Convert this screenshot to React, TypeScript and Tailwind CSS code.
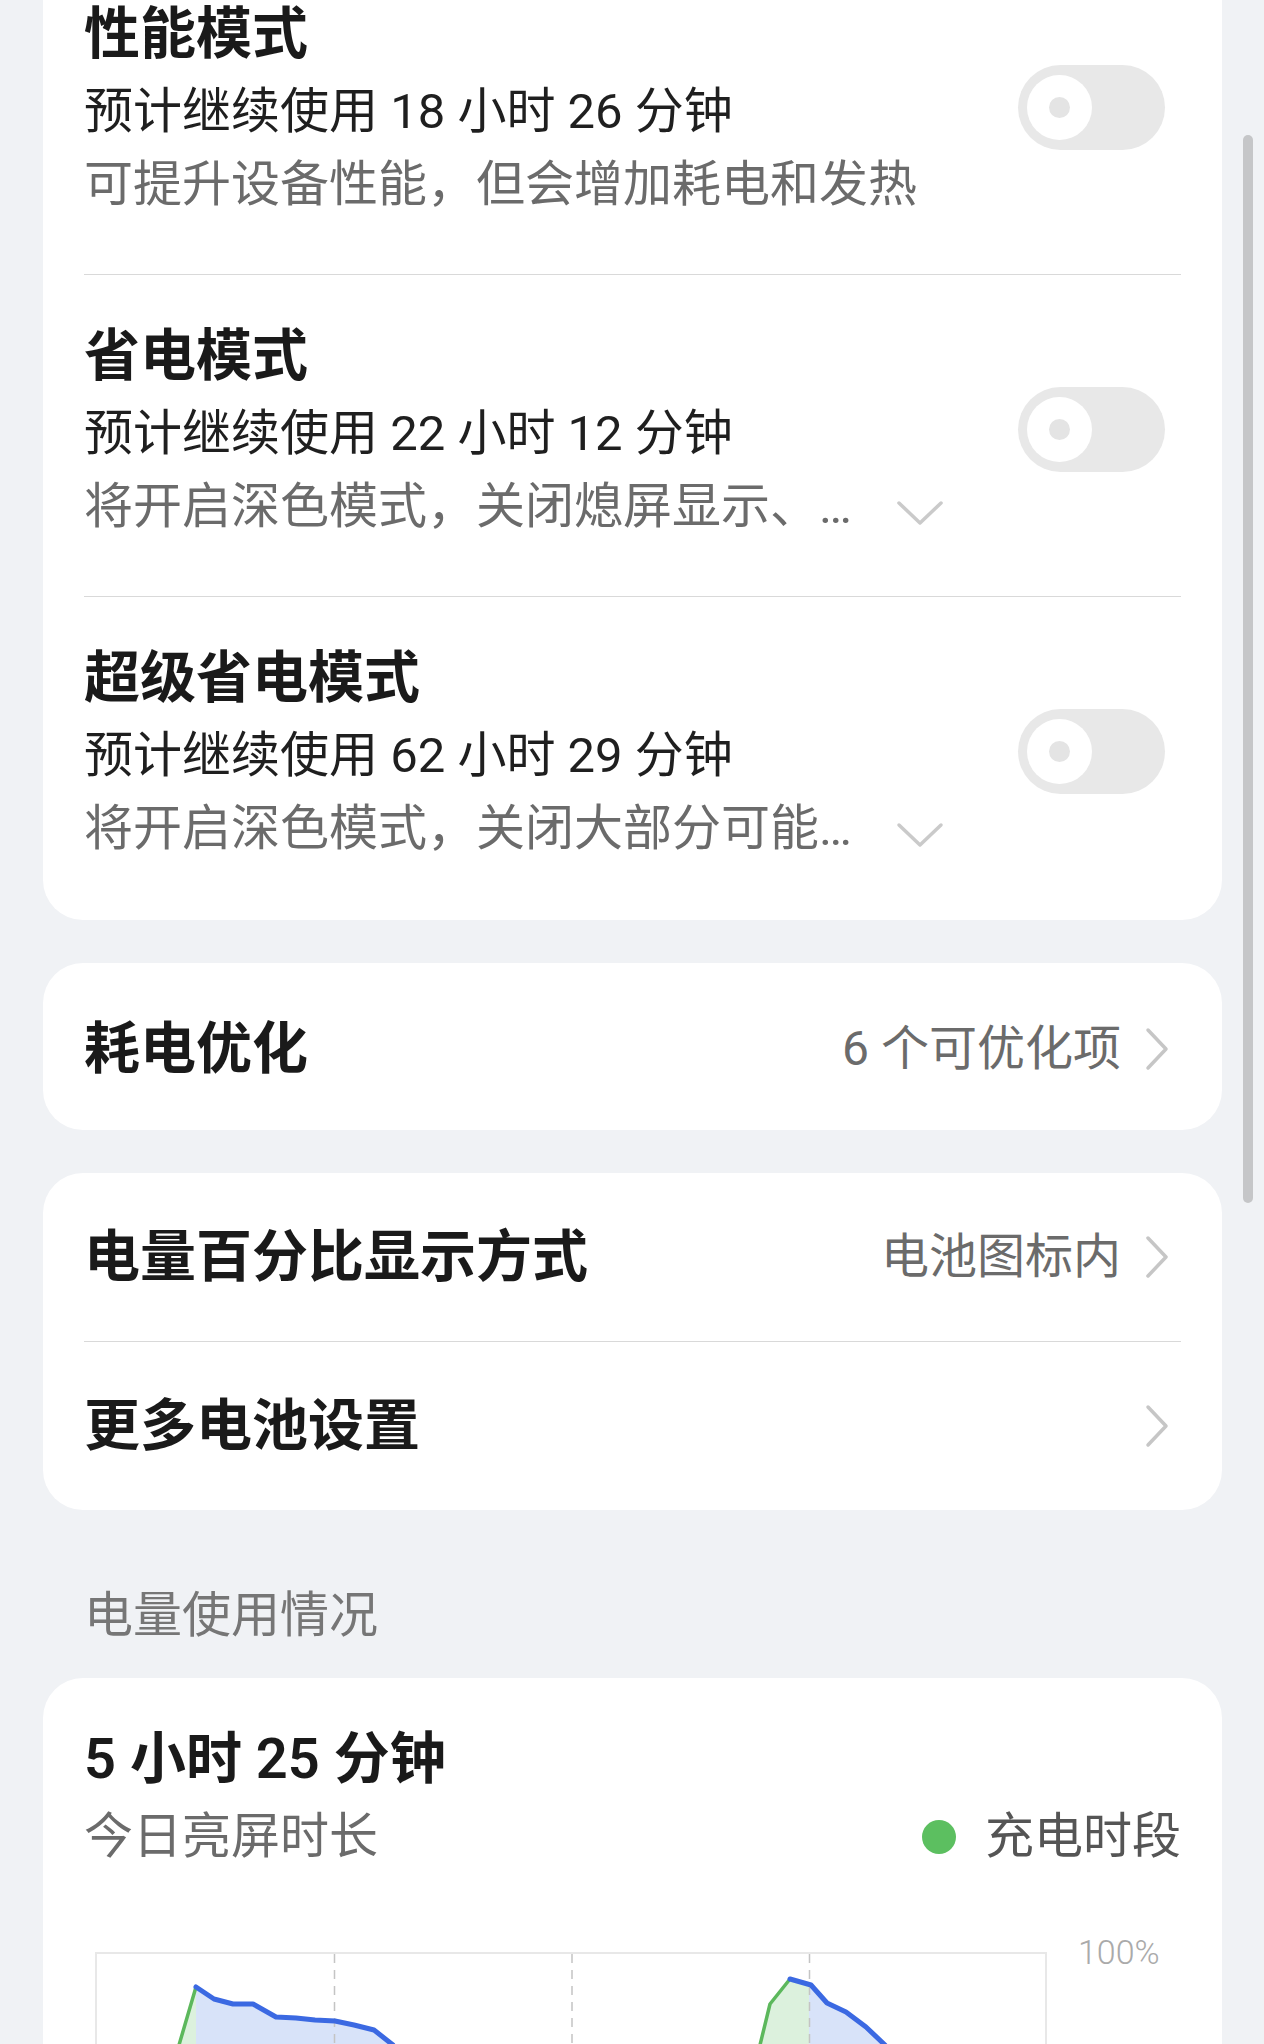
import React from "react";

function Toggle() {
  return (
    <div className="flex items-center pl-[9px] w-[147px] h-[85px] rounded-full bg-[#e8e8e8] shrink-0 mr-[16px]">
      <div className="flex items-center justify-center w-[65px] h-[65px] rounded-full bg-white">
        <div className="w-[21px] h-[21px] rounded-full bg-[#e4e4e4]" />
      </div>
    </div>
  );
}

function ChevronDown() {
  return (
    <svg width="48" height="26" viewBox="0 0 48 26" className="ml-[12px] mt-[28px] shrink-0">
      <path d="M3 3 L24 23 L45 3" fill="none" stroke="#cacaca" strokeWidth="3.5" strokeLinecap="round" strokeLinejoin="round" />
    </svg>
  );
}

function ChevronRight() {
  return (
    <svg width="24" height="44" viewBox="0 0 24 44" className="ml-[24px] mr-[12px] shrink-0">
      <path d="M3 3 L21 22 L3 41" fill="none" stroke="#c6c6c6" strokeWidth="3.5" strokeLinecap="round" strokeLinejoin="round" />
    </svg>
  );
}

type Mode = { title: string; sub: string; desc: string; more?: boolean };

const modes: Mode[] = [
  { title: "性能模式", sub: "预计继续使用 18 小时 26 分钟", desc: "可提升设备性能，但会增加耗电和发热" },
  { title: "省电模式", sub: "预计继续使用 22 小时 12 分钟", desc: "将开启深色模式，关闭熄屏显示、…", more: true },
  { title: "超级省电模式", sub: "预计继续使用 62 小时 29 分钟", desc: "将开启深色模式，关闭大部分可能…", more: true },
];

function ModeItem({ m }: { m: Mode }) {
  return (
    <div className="flex items-center pt-[41px] pb-[54px]">
      <div className="flex-1 min-w-0">
        <div className="text-[56px] leading-[80px] font-semibold text-[#1a1a1a]">{m.title}</div>
        <div className="text-[49px] leading-[76px] text-[#1f1f1f]">{m.sub}</div>
        <div className="flex items-start text-[49px] leading-[70px] text-[#6b6b6b]">
          <span className="w-[800px] whitespace-nowrap">{m.desc}</span>
          {m.more && <ChevronDown />}
        </div>
      </div>
      <Toggle />
    </div>
  );
}

function Chart() {
  const blue1 = "99,33 117,45 136,50 156,50 179,63 199,64 218,66 238,67 257,71 277,76 296,91 315,120 330,160 345,205 356,250 362,300";
  const green1 = "40,300 64,150 82,91 99,33";
  const green2 = "650,300 657,130 663,91 673,50 693,25";
  const blue2 = "693,25 714,31 730,49 749,58 769,73 788,91 805,120 820,170 830,230 835,300";
  return (
    <svg width="950" height="300" viewBox="0 0 950 300" className="block">
      <polygon points={`${green1} 99,300`} fill="#dcf1dd" />
      <polygon points={`${blue1} 99,300`} fill="#d8e3f9" />
      <polygon points={`${green2} 712,30 712,300`} fill="#dcf1dd" />
      <polygon points={`712,30 ${blue2} 712,300`} fill="#d8e3f9" />
      {[237.5, 475, 712.5].map((x) => (
        <line key={x} x1={x} y1="0" x2={x} y2="300" stroke="#c4c4c4" strokeWidth="1.5" strokeDasharray="9 7" />
      ))}
      <polyline points={green1} fill="none" stroke="#5cb85c" strokeWidth="3.5" strokeLinejoin="round" />
      <polyline points={green2} fill="none" stroke="#5cb85c" strokeWidth="3.5" strokeLinejoin="round" />
      <polyline points={blue1} fill="none" stroke="#3b69e2" strokeWidth="5" strokeLinejoin="round" strokeLinecap="round" />
      <polyline points={blue2} fill="none" stroke="#3b69e2" strokeWidth="5" strokeLinejoin="round" strokeLinecap="round" />
    </svg>
  );
}

export default function App() {
  return (
    <div className="relative h-[2044px] overflow-hidden bg-[#f0f2f5] font-['Roboto','Noto_Sans_CJK_SC',sans-serif]">
      <div className="pl-[43px] pr-[42px]">
        {/* Modes card */}
        <div className="-mt-[47px] bg-white rounded-[40px] px-[41px] pb-[2px]">
          {modes.map((m, i) => (
            <div key={m.title}>
              {i > 0 && <div className="h-px bg-[#d9d9d9]" />}
              <ModeItem m={m} />
            </div>
          ))}
        </div>

        {/* 耗电优化 */}
        <div className="mt-[43px] bg-white rounded-[40px] px-[41px]">
          <div className="flex items-center h-[167px] pt-[4px]">
            <div className="flex-1 text-[56px] font-semibold text-[#1a1a1a]">耗电优化</div>
            <div className="text-[48px] text-[#6b6b6b]">6 个可优化项</div>
            <ChevronRight />
          </div>
        </div>

        {/* settings */}
        <div className="mt-[43px] bg-white rounded-[40px] px-[41px]">
          <div className="flex items-center h-[168px]">
            <div className="flex-1 text-[56px] font-semibold text-[#1a1a1a]">电量百分比显示方式</div>
            <div className="text-[48px] text-[#6b6b6b]">电池图标内</div>
            <ChevronRight />
          </div>
          <div className="h-px bg-[#d9d9d9]" />
          <div className="flex items-center h-[168px]">
            <div className="flex-1 text-[56px] font-semibold text-[#1a1a1a]">更多电池设置</div>
            <ChevronRight />
          </div>
        </div>

        {/* section header */}
        <div className="mt-[74px] px-[41px] text-[49px] leading-[64px] text-[#767676]">电量使用情况</div>

        {/* usage card */}
        <div className="mt-[30px] bg-white rounded-[40px] px-[41px] pt-[41px] pb-[40px]">
          <div className="text-[56px] leading-[80px] font-semibold text-[#1a1a1a]">5 小时 25 分钟</div>
          <div className="flex items-center text-[49px] leading-[76px]">
            <div className="flex-1 text-[#6b6b6b]">今日亮屏时长</div>
            <div className="w-[34px] h-[34px] rounded-full bg-[#5cbf60] mr-[29px]" />
            <div className="text-[#555555]">充电时段</div>
          </div>
          <div className="flex items-start mt-[77px]">
            <div className="ml-[11px] w-[952px] border-t-2 border-x-2 border-[#e8e8e8]">
              <Chart />
            </div>
            <div className="ml-[31px] -mt-[22px] text-[34px] leading-[44px] font-light text-[#aaaaaa]">100%</div>
          </div>
        </div>
      </div>

      {/* scrollbar */}
      <div className="absolute right-[11px] top-[135px] w-[10px] h-[1068px] rounded-full bg-[#c5c6c8]" />
    </div>
  );
}
